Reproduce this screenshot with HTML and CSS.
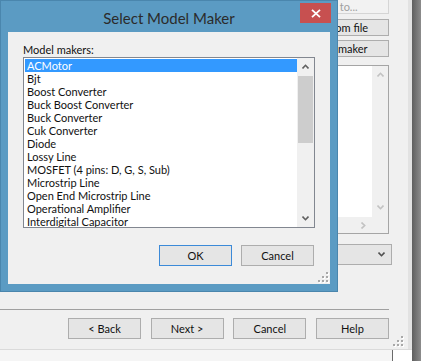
FILE: index.html
```html
<!DOCTYPE html>
<html lang="en">
<head>
    <meta charset="UTF-8">
    <title>Select Model Maker</title>
    <link rel="stylesheet" href="styles.css">
</head>
<body>
<div class="screen">
    <div class="left-col">
        <!-- wizard window behind the dialog -->
        <div class="wizard">
            <div class="wiz-main">
                <div class="side">
                    <div class="btn btn-off">Save to...</div>
                    <div class="btn side-btn">Load from file</div>
                    <div class="btn side-btn">Model maker</div>
                    <div class="box">
                        <div class="box-view"></div>
                        <div class="box-vbar">
                            <svg width="7" height="5"><path d="M0.5 4.5 L3.5 1.3 L6.5 4.5" fill="none" stroke="#c2c2c2" stroke-width="1.6"/></svg>
                            <svg width="7" height="5"><path d="M0.5 0.5 L3.5 3.7 L6.5 0.5" fill="none" stroke="#c2c2c2" stroke-width="1.6"/></svg>
                        </div>
                        <div class="box-hbar">
                            <svg width="5" height="7"><path d="M0.5 0.5 L3.7 3.5 L0.5 6.5" fill="none" stroke="#c2c2c2" stroke-width="1.6"/></svg>
                        </div>
                        <div class="box-corner"></div>
                    </div>
                    <div class="combo">
                        <svg width="7" height="5"><path d="M0.5 0.5 L3.5 3.7 L6.5 0.5" fill="none" stroke="#505050" stroke-width="1.6"/></svg>
                    </div>
                </div>
            </div>
            <div class="wiz-foot">
                <div class="btn wiz-btn">&lt; Back</div>
                <div class="btn wiz-btn">Next &gt;</div>
                <div class="btn wiz-btn">Cancel</div>
                <div class="btn wiz-btn">Help</div>
            </div>
            <svg class="grip wiz-grip" width="11" height="11">
                <g fill="#fff"><rect x="9" y="1" width="2" height="2"/><rect x="5" y="5" width="2" height="2"/><rect x="9" y="5" width="2" height="2"/><rect x="1" y="9" width="2" height="2"/><rect x="5" y="9" width="2" height="2"/><rect x="9" y="9" width="2" height="2"/></g>
                <g fill="#a8a8a8"><rect x="8" y="0" width="2" height="2"/><rect x="4" y="4" width="2" height="2"/><rect x="8" y="4" width="2" height="2"/><rect x="0" y="8" width="2" height="2"/><rect x="4" y="8" width="2" height="2"/><rect x="8" y="8" width="2" height="2"/></g>
            </svg>
        </div>
        <div class="below">
            <div class="below-a"></div>
            <div class="below-b"></div>
        </div>
    </div>
    <div class="shade"></div>

    <!-- dialog -->
    <div class="dialog">
        <div class="title-bar">
            Select Model Maker
            <div class="close">
                <svg width="10" height="9"><path d="M1 0.8 L9 8.2 M9 0.8 L1 8.2" stroke="#fff" stroke-width="1.8"/></svg>
            </div>
        </div>
        <div class="content">
            <div class="label">Model makers:</div>
            <div class="list">
                <div class="items">
                    <div class="item selected">ACMotor</div>
                    <div class="item">Bjt</div>
                    <div class="item">Boost Converter</div>
                    <div class="item">Buck Boost Converter</div>
                    <div class="item">Buck Converter</div>
                    <div class="item">Cuk Converter</div>
                    <div class="item">Diode</div>
                    <div class="item">Lossy Line</div>
                    <div class="item">MOSFET (4 pins: D, G, S, Sub)</div>
                    <div class="item">Microstrip Line</div>
                    <div class="item">Open End Microstrip Line</div>
                    <div class="item">Operational Amplifier</div>
                    <div class="item">Interdigital Capacitor</div>
                </div>
                <div class="vbar">
                    <div class="arrow">
                        <svg width="7" height="5"><path d="M0.5 4.5 L3.5 1.3 L6.5 4.5" fill="none" stroke="#606060" stroke-width="1.6"/></svg>
                    </div>
                    <div class="thumb"></div>
                    <div class="track"></div>
                    <div class="arrow">
                        <svg width="7" height="5"><path d="M0.5 0.5 L3.5 3.7 L6.5 0.5" fill="none" stroke="#606060" stroke-width="1.6"/></svg>
                    </div>
                </div>
            </div>
            <div class="actions">
                <div class="btn dlg-btn default">OK</div>
                <div class="btn dlg-btn">Cancel</div>
            </div>
            <svg class="grip dlg-grip" width="11" height="11">
                <g fill="#fff"><rect x="9" y="1" width="2" height="2"/><rect x="5" y="5" width="2" height="2"/><rect x="9" y="5" width="2" height="2"/><rect x="1" y="9" width="2" height="2"/><rect x="5" y="9" width="2" height="2"/><rect x="9" y="9" width="2" height="2"/></g>
                <g fill="#a8a8a8"><rect x="8" y="0" width="2" height="2"/><rect x="4" y="4" width="2" height="2"/><rect x="8" y="4" width="2" height="2"/><rect x="0" y="8" width="2" height="2"/><rect x="4" y="8" width="2" height="2"/><rect x="8" y="8" width="2" height="2"/></g>
            </svg>
        </div>
    </div>
</div>
</body>
</html>
```

FILE: styles.css
```css
body { margin: 0; background: #fff; font-family: Lato, "Liberation Sans", sans-serif; font-size: 11px; color: #111; }
.screen { position: relative; display: flex; width: 421px; height: 361px; overflow: hidden; }
.left-col { width: 412px; display: flex; flex-direction: column; }

/* wizard */
.wizard {
    height: 350px;
    box-sizing: border-box;
    background: linear-gradient(90deg, #f0f0f0 408px, #e2e2e2 408px);
    border-bottom: 1px solid #dadada;
    display: flex;
    flex-direction: column;
    position: relative;
}
.wiz-main { height: 309px; display: flex; justify-content: flex-end; padding-right: 23px; }
.side { width: 114px; display: flex; flex-direction: column; }
.btn {
    box-sizing: border-box;
    height: 21px;
    border: 1px solid #adadad;
    background: #e5e5e5;
    display: flex;
    align-items: center;
    justify-content: center;
}
.btn-off { height: 14px; border-top: none; color: #a0a0a0; border-color: #d5d5d5; background: #f2f2f2; padding-left: 8px; }
.side-btn { height: 17px; margin-top: 5px; padding-left: 6px; }
.side-btn + .side-btn { margin-top: 4px; padding-left: 8px; }
.box {
    box-sizing: border-box;
    margin-top: 8px;
    height: 169px;
    border: 1px solid #a5a5a5;
    display: grid;
    grid-template-columns: 1fr 16px;
    grid-template-rows: 1fr 16px;
}
.box-view { background: #fff; }
.box-vbar { background: #f0f0f0; display: flex; flex-direction: column; justify-content: space-between; align-items: center; padding: 6px 0 7px; }
.box-hbar { background: #f0f0f0; display: flex; justify-content: flex-end; align-items: center; padding-right: 6px; }
.box-corner { background: #f0f0f0; }
.combo {
    box-sizing: border-box;
    margin-top: 10px;
    margin-right: -3px;
    height: 21px;
    border: 1px solid #adadad;
    background: #e5e5e5;
    display: flex;
    justify-content: flex-end;
    align-items: center;
    padding-right: 6px;
}
.wiz-foot {
    border-top: 1px solid #a0a0a0;
    margin-right: 23px;
    padding: 8px 0 0 68px;
    display: flex;
    justify-content: space-between;
}
.wiz-btn { width: 73px; }
.grip { position: absolute; }
.wiz-grip { right: 8px; bottom: 2px; }
.below { flex: 1; display: flex; }
.below-a { width: 392px; background: #f5f5f5; border-right: 1px solid #6a6a6a; }
.below-b { flex: 1; background: #fff; }
.shade { flex: 1; background: linear-gradient(90deg, #5f5f5f, #8c8c8c); }

/* dialog */
.dialog {
    position: absolute;
    left: 0;
    top: 0;
    width: 338px;
    height: 292px;
    box-sizing: border-box;
    background: #5b9bc3;
    border: 1px solid #4a86ad;
    padding: 0 7px 7px;
    display: flex;
    flex-direction: column;
}
.title-bar {
    height: 31px;
    padding-top: 2px;
    box-sizing: border-box;
    display: flex;
    align-items: center;
    justify-content: center;
    font-size: 15px;
    color: #2b2b2b;
}
.close {
    position: absolute;
    right: 6px;
    top: 2px;
    width: 31px;
    height: 20px;
    background: #c75050;
    display: flex;
    align-items: center;
    justify-content: center;
}
.content {
    flex: 1;
    background: #f0f0f0;
    padding: 10px 15px 0 15px;
    position: relative;
    display: flex;
    flex-direction: column;
}
.label { height: 15px; line-height: 15px; }
.list {
    box-sizing: border-box;
    height: 171px;
    border: 1px solid #828790;
    background: #fff;
    display: flex;
}
.items { flex: 1; padding: 1px 0 0 1px; overflow: hidden; }
.item { height: 13px; line-height: 13px; padding-left: 2px; white-space: nowrap; }
.item.selected { background: #3399ff; color: #fff; }
.vbar { width: 17px; background: #f0f0f0; display: flex; flex-direction: column; align-items: center; }
.arrow { height: 17px; width: 17px; display: flex; align-items: center; justify-content: center; }
.thumb { width: 15px; height: 67px; margin-top: 1px; background: #cdcdcd; }
.track { flex: 1; }
.actions { margin-top: 17px; display: flex; justify-content: flex-end; gap: 9px; padding-right: 1px; }
.dlg-btn { width: 73px; }
.dlg-btn.default { border-color: #3c8ad8; }
.dlg-grip { right: 1px; bottom: 1px; }
```
